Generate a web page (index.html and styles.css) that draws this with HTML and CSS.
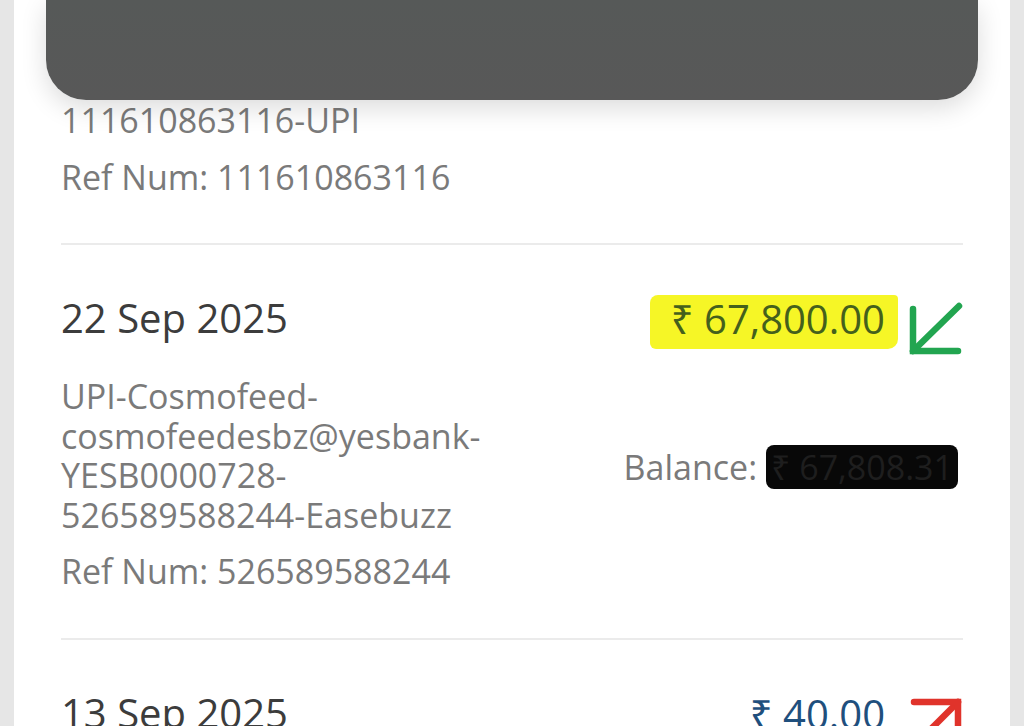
FILE: index.html
```html
<!DOCTYPE html>
<html lang="en">
<head>
  <meta charset="UTF-8"/>
  <meta name="viewport" content="width=device-width, initial-scale=1"/>
  <title>Account Statement</title>
  <link rel="stylesheet" href="styles.css">
</head>
<body>
  <div class="sheet">
    <!-- dark toast sitting over the list -->
    <div class="toast"></div>

    <!-- scrolled-off transaction -->
    <div class="txn txn-cut">
      <p class="desc">111610863116-UPI</p>
      <p class="ref">Ref Num: 111610863116</p>
    </div>

    <div class="txn">
      <div class="txn-head">
        <span class="date">22 Sep 2025</span>
        <div class="amount-wrap">
          <span class="amount credit marked">₹ 67,800.00</span>
          <svg class="arrow" viewBox="0 0 58 56" width="58" height="56">
            <path d="M53 5 L7 50" fill="none" stroke="#22a550" stroke-width="6.5" stroke-linecap="round"/>
            <path d="M7 8 L7 50 L52 50" fill="none" stroke="#22a550" stroke-width="6.5" stroke-linecap="round" stroke-linejoin="miter"/>
          </svg>
        </div>
      </div>
      <div class="txn-body">
        <p class="desc">UPI-Cosmofeed-<br>cosmofeedesbz@yesbank-<br>YESB0000728-<br>526589588244-Easebuzz</p>
        <p class="balance">Balance: <span class="redact">₹ 67,808.31</span></p>
      </div>
      <p class="ref">Ref Num: 526589588244</p>
    </div>

    <div class="txn">
      <div class="txn-head">
        <span class="date">13 Sep 2025</span>
        <div class="amount-wrap">
          <span class="amount debit">₹ 40.00</span>
          <svg class="arrow" viewBox="0 0 58 56" width="58" height="56">
            <path d="M52 6 L7 51" fill="none" stroke="#e0332b" stroke-width="6.5" stroke-linecap="round"/>
            <path d="M8 6 L52 6 L52 50" fill="none" stroke="#e0332b" stroke-width="6.5" stroke-linecap="round" stroke-linejoin="miter"/>
          </svg>
        </div>
      </div>
    </div>
  </div>
</body>
</html>
```

FILE: styles.css
```css
/* page + white sheet */
html, body {
  margin: 0; padding: 0;
  height: 100%;
  background: #e6e6e6;
  overflow: hidden;
  font-family: "Open Sans", "Noto Sans", sans-serif;
}

.sheet {
  position: relative;
  margin: 0 14px;
  min-height: 100%;
  background: #fff;
  padding: 0 47px;
}

/* toast over the top of the list */
.toast {
  position: absolute;
  top: 0; left: 32px; right: 32px;
  height: 100px;
  border-radius: 0 0 40px 40px;
  background: linear-gradient(180deg, #565958 0%, #585858 100%);
  box-shadow: 0 8px 26px rgba(0,0,0,0.14);
  z-index: 2;
}

p { margin: 0; }

/* one transaction */
.txn {
  padding: 47px 0 46px;
  border-bottom: 2px solid #ebebeb;
}
.txn-cut { padding-top: 101px; }

.txn-head {
  display: flex;
  align-items: flex-start;
  justify-content: space-between;
}

.date {
  font-size: 40px;
  line-height: 48px;
  margin-top: 2px;
  color: #3c3c3c;
}

.amount-wrap {
  display: flex;
  align-items: flex-start;
  gap: 8px;
  margin: 3px -1px 0 0;
}
.amount {
  font-size: 40px;
  line-height: 48px;
  padding: 0 13px 6px 21px;
}
.amount.credit { color: #44601c; }
.amount.debit  { color: #1f4f7d; }
.amount.marked {
  background: #f6f626;
  border-radius: 8px 4px 10px 6px;
}
.arrow {
  display: block;
  margin-top: 6px;
}

.txn-body {
  display: flex;
  align-items: center;
  justify-content: space-between;
  margin-top: 20px;
}

.desc, .ref, .balance {
  font-size: 34px;
  line-height: 39.5px;
  color: #7a7a7a;
}
.ref { margin-top: 17px; }

.balance {
  margin: 22px 5px 0 0;
}
.redact {
  display: inline-block;
  background: #080808;
  color: #1e1e1e;
  border-radius: 8px;
  padding: 2px 5px;
  line-height: 40px;
}
```
